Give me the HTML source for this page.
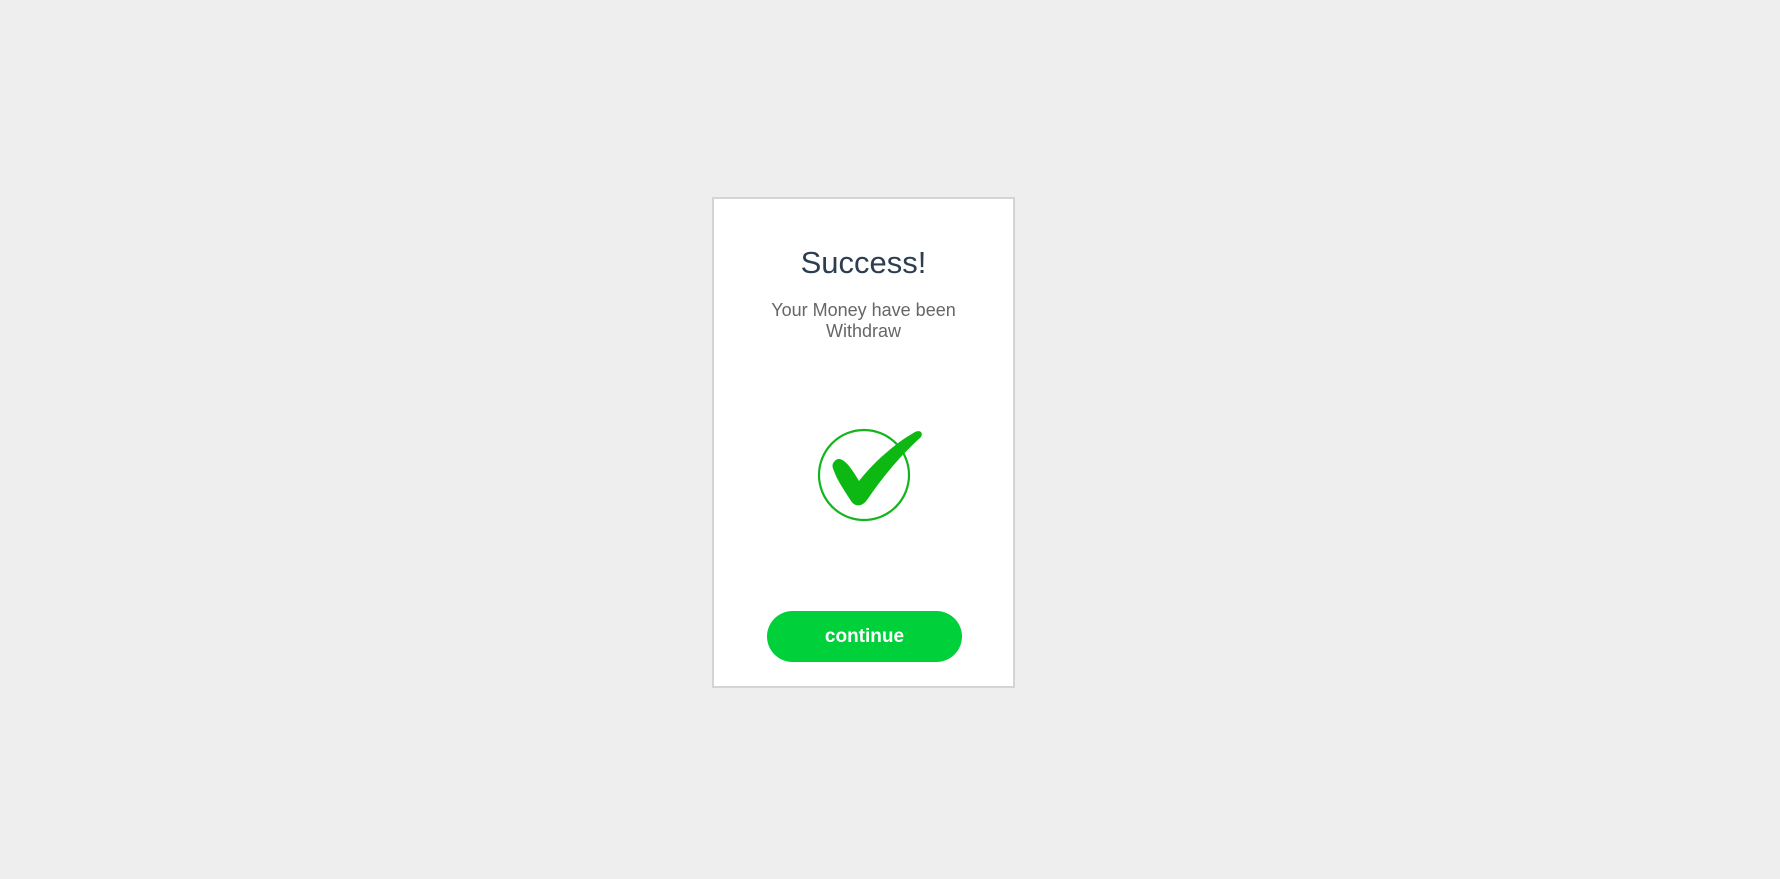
<!DOCTYPE html>
<html><head><style>
html,body{margin:0;padding:0;}
body{width:1780px;height:879px;background:#eeeeee;position:relative;font-family:"Liberation Sans",sans-serif;overflow:hidden;}
.card{position:absolute;left:712px;top:197px;width:299px;height:487px;background:#fff;border:2px solid #d4d4d4;}
h1{position:absolute;left:712px;width:303px;top:245px;margin:0;text-align:center;font-weight:400;font-size:31px;color:#2c3e50;}
.sub{position:absolute;left:712px;width:303px;top:300px;text-align:center;font-size:18px;line-height:21px;color:#666;}
.btn{position:absolute;left:767px;top:611px;width:195px;height:51px;border-radius:26px;background:#00d13a;color:#fff;font-weight:700;font-size:19px;text-align:center;line-height:51px;}
svg{position:absolute;left:0;top:0;}
</style></head><body>
<div class="card"></div>
<h1>Success!</h1>
<div class="sub">Your Money have been<br>Withdraw</div>
<svg width="1780" height="879">
<circle cx="864" cy="475" r="45" fill="none" stroke="#13b51c" stroke-width="2.2"/>
<path d="M834 462 C838 456 844 460 849 466 C853 471 856 476 859 481 C873 463 894 444 915 432 C921 429 924 434 920 438 C900 456 882 478 867 500 C862 507 855 507 851 501 C844 490 837 480 834 471 C832 467 832 464 834 462 Z" fill="#0db813"/>
</svg>
<div class="btn">continue</div>
</body></html>
